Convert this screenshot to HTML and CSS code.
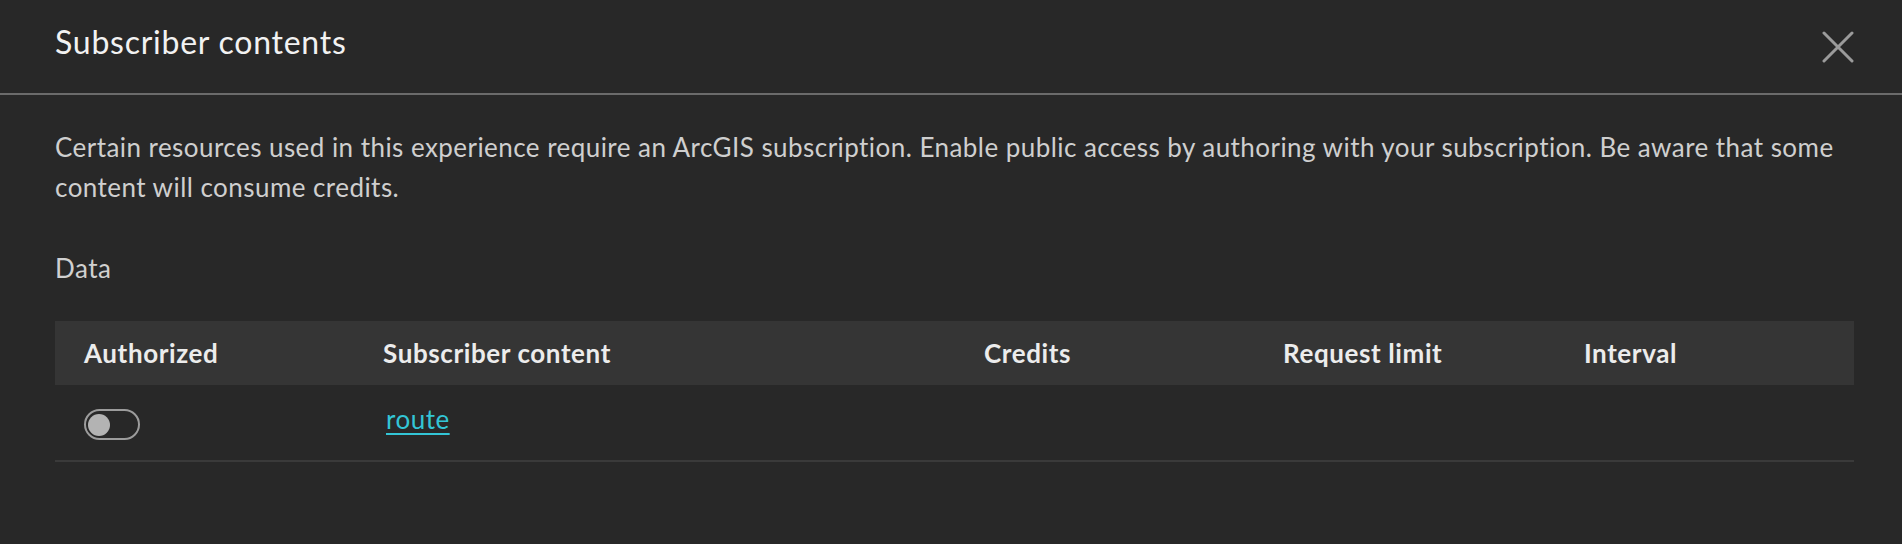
FILE: index.html
```html
<!DOCTYPE html>
<html lang="en">
<head>
<meta charset="utf-8">
<title>Subscriber contents</title>
<link rel="stylesheet" href="styles.css">
</head>
<body>
<div class="modal">
  <header class="modal-header">
    <h2 class="modal-title">Subscriber contents</h2>
    <button class="close-btn" aria-label="Close">
      <svg viewBox="0 0 32 32" width="32" height="32" aria-hidden="true">
        <path d="M2 2 L30 30 M30 2 L2 30" fill="none" stroke="#9b9b9b" stroke-width="3" stroke-linecap="round"/>
      </svg>
    </button>
  </header>
  <div class="modal-body">
    <p class="desc">Certain resources used in this experience require an ArcGIS subscription. Enable public access by authoring with your subscription. Be aware that some content will consume credits.</p>
    <div class="section-label">Data</div>
    <table class="sub-table">
      <colgroup>
        <col class="c1"><col class="c2"><col class="c3"><col class="c4"><col class="c5">
      </colgroup>
      <thead>
        <tr>
          <th>Authorized</th>
          <th>Subscriber content</th>
          <th>Credits</th>
          <th>Request limit</th>
          <th>Interval</th>
        </tr>
      </thead>
      <tbody>
        <tr>
          <td class="toggle-cell"><span class="toggle" role="switch" aria-checked="false"><span class="knob"></span></span></td>
          <td class="link-cell"><a class="link" href="#">route</a></td>
          <td></td>
          <td></td>
          <td></td>
        </tr>
      </tbody>
    </table>
  </div>
</div>
</body>
</html>
```
FILE: styles.css
```css
html, body {
  margin: 0;
  padding: 0;
  background: #282828;
}
body {
  font-family: Lato, "Noto Sans", "Liberation Sans", sans-serif;
  color: #d2d2d2;
}
.modal {
  width: 100%;
}
.modal-header {
  height: 95px;
  box-sizing: border-box;
  display: flex;
  justify-content: space-between;
  align-items: flex-start;
  padding: 22px 48px 0 55px;
  border-bottom: 2px solid #6b6b6b;
}
.modal-title {
  margin: 0;
  font-size: 32px;
  line-height: 40px;
  font-weight: 400;
  letter-spacing: 0.75px;
  color: #f2f2f2;
}
.close-btn {
  margin-top: 9px;
  padding: 0;
  border: 0;
  background: none;
  width: 32px;
  height: 32px;
  display: block;
  cursor: pointer;
}
.close-btn svg {
  display: block;
}
.modal-body {
  padding: 0 48px 0 55px;
}
.desc {
  margin: 32px 0 0 0;
  font-size: 26px;
  line-height: 40px;
  letter-spacing: 0.45px;
  color: #cfcfcf;
}
.section-label {
  margin-top: 41px;
  font-size: 26px;
  line-height: 40px;
  letter-spacing: 0.5px;
  color: #d0d0d0;
}
.sub-table {
  margin-top: 33px;
  width: 100%;
  border-collapse: collapse;
  table-layout: fixed;
}
.c1 { width: 299px; }
.c2 { width: 601px; }
.c3 { width: 299px; }
.c4 { width: 301px; }
.c5 { width: auto; }
.sub-table th {
  background: #353535;
  height: 64px;
  padding: 0 0 0 29px;
  text-align: left;
  font-size: 26px;
  font-weight: 700;
  letter-spacing: 0.6px;
  color: #ececec;
  vertical-align: middle;
}
.sub-table td {
  height: 75px;
  padding: 0 0 0 29px;
  border-bottom: 2px solid #3a3a3a;
  vertical-align: middle;
  font-size: 26px;
}
.sub-table td.link-cell {
  height: 67px;
  padding-bottom: 8px;
}
.sub-table td.toggle-cell {
  height: 71px;
  padding-top: 4px;
}
.toggle {
  display: flex;
  align-items: center;
  box-sizing: border-box;
  width: 56px;
  height: 31px;
  border: 2px solid #9c9c9c;
  border-radius: 16px;
  padding-left: 2px;
}
.knob {
  width: 22px;
  height: 22px;
  border-radius: 50%;
  background: #b3b3b3;
}
.link {
  color: #33c5d6;
  letter-spacing: 0.5px;
  text-decoration: underline;
  text-decoration-thickness: 2px;
  text-underline-offset: 4px;
  margin-left: 3px;
}
```
